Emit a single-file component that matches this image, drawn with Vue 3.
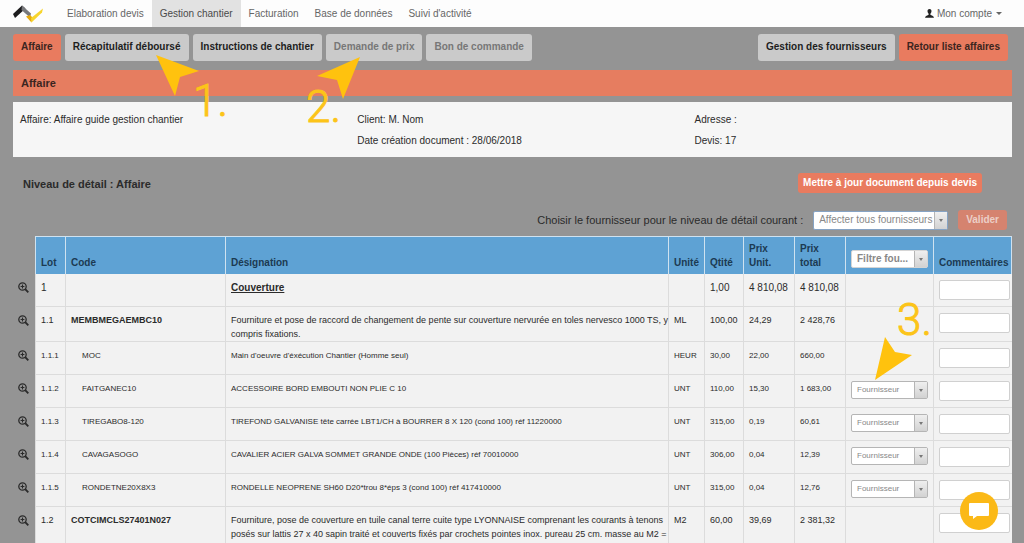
<script setup>
import { ref } from 'vue'

const navItems = ['Elaboration devis', 'Gestion chantier', 'Facturation', 'Base de données', "Suivi d'activité"]
const activeNav = ref('Gestion chantier')

const actions = [
  { label: 'Affaire', kind: 'primary' },
  { label: 'Récapitulatif déboursé', kind: 'plain' },
  { label: 'Instructions de chantier', kind: 'plain' },
  { label: 'Demande de prix', kind: 'muted' },
  { label: 'Bon de commande', kind: 'muted' },
]

const rows = [
  { lot: '1', code: '', text: 'Couverture', unit: '', qty: '1,00', price: '4 810,08', total: '4 810,08', level: 'lot' },
  { lot: '1.1', code: 'MEMBMEGAEMBC10', text: 'Fourniture et pose de raccord de changement de pente sur couverture nervurée en toles nervesco 1000 TS, y\ncompris fixations.', unit: 'ML', qty: '100,00', price: '24,29', total: '2 428,76', level: 'work' },
  { lot: '1.1.1', code: 'MOC', text: "Main d'oeuvre d'éxécution Chantier (Homme seul)", unit: 'HEUR', qty: '30,00', price: '22,00', total: '660,00', level: 'item' },
  { lot: '1.1.2', code: 'FAITGANEC10', text: 'ACCESSOIRE BORD EMBOUTI NON PLIE C 10', unit: 'UNT', qty: '110,00', price: '15,30', total: '1 683,00', level: 'item', supplier: true },
  { lot: '1.1.3', code: 'TIREGABO8-120', text: 'TIREFOND GALVANISE tête carrée LBT1/CH à BOURRER 8 X 120 (cond 100) réf 11220000', unit: 'UNT', qty: '315,00', price: '0,19', total: '60,61', level: 'item', supplier: true },
  { lot: '1.1.4', code: 'CAVAGASOGO', text: 'CAVALIER ACIER GALVA SOMMET GRANDE ONDE (100 Pièces) réf 70010000', unit: 'UNT', qty: '306,00', price: '0,04', total: '12,39', level: 'item', supplier: true },
  { lot: '1.1.5', code: 'RONDETNE20X8X3', text: 'RONDELLE NEOPRENE SH60 D20*trou 8*éps 3 (cond 100) réf 417410000', unit: 'UNT', qty: '315,00', price: '0,04', total: '12,76', level: 'item', supplier: true },
  { lot: '1.2', code: 'COTCIMCLS27401N027', text: 'Fourniture, pose de couverture en tuile canal terre cuite type LYONNAISE comprenant les courants à tenons\nposés sur lattis 27 x 40 sapin traité et couverts fixés par crochets pointes inox. pureau 25 cm. masse au M2 =', unit: 'M2', qty: '60,00', price: '39,69', total: '2 381,32', level: 'work' },
]
</script>

<template>
  <div class="page">
    <header class="navbar">
      <a class="logo" href="#" aria-label="Accueil">
        <svg width="32" height="20" viewBox="0 0 32 20">
          <path d="M0 10 9 1.500 12.500 4.500 2 14z" fill="#1c1c1e" />
          <path d="M9 1.500 18 9.500 17 13.500 8.500 6z" fill="#77787b" />
          <path d="M13 12.500 17 11 19.500 13.500 18.500 18.500z" fill="#e8a90c" />
          <path d="M18.500 18.500 18 14 30 4.500 29 8.500z" fill="#f7d52e" />
        </svg>
      </a>
      <nav class="nav">
        <a v-for="item in navItems" :key="item" href="#" :class="{ active: item === activeNav }" @click.prevent="activeNav = item">{{ item }}</a>
      </nav>
      <a class="account" href="#">
        <svg width="9" height="9" viewBox="0 0 10 10"><path d="M5 0C3.400 0 2.600 1.200 2.800 2.800 2.900 3.900 3.400 4.800 4 5.300V6.400C3 7 .3 7.500 0 9.700H10C9.700 7.500 7 7 6 6.400V5.300C6.600 4.800 7.100 3.900 7.200 2.800 7.400 1.200 6.600 0 5 0z" fill="#222" /></svg>
        <span>Mon compte</span>
        <span class="caret"></span>
      </a>
    </header>

    <main class="content">
      <div class="toolbar">
        <button v-for="a in actions" :key="a.label" type="button" class="btn" :class="a.kind">{{ a.label }}</button>
        <span class="spacer"></span>
        <button type="button" class="btn plain">Gestion des fournisseurs</button>
        <button type="button" class="btn primary">Retour liste affaires</button>
      </div>

      <h1 class="title">Affaire</h1>

      <section class="info">
        <div><p>Affaire: Affaire guide gestion chantier</p></div>
        <div><p>Client: M. Nom</p><p>Date création document : 28/06/2018</p></div>
        <div><p>Adresse :</p><p>Devis: 17</p></div>
      </section>

      <div class="level">
        <h2>Niveau de détail : Affaire</h2>
        <button type="button" class="small-btn">Mettre à jour document depuis devis</button>
      </div>

      <div class="assign">
        <label for="assign-all">Choisir le fournisseur pour le niveau de détail courant :</label>
        <span class="picker wide">
          <select id="assign-all"><option>Affecter tous fournisseurs</option></select>
          <span class="arrow"></span>
        </span>
        <button type="button" class="small-btn" disabled>Valider</button>
      </div>

      <table class="grid">
        <colgroup>
          <col class="c-zoom"><col class="c-lot"><col class="c-code"><col><col class="c-unit"><col class="c-qty"><col class="c-price"><col class="c-price"><col class="c-supplier"><col class="c-comment">
        </colgroup>
        <thead>
          <tr>
            <td class="zoom"></td>
            <th>Lot</th>
            <th>Code</th>
            <th>Désignation</th>
            <th>Unité</th>
            <th>Qtité</th>
            <th>Prix<br>Unit.</th>
            <th>Prix<br>total</th>
            <th>
              <span class="picker filter">
                <select aria-label="Filtre fournisseur"><option>Filtre fou...</option></select>
                <span class="arrow"></span>
              </span>
            </th>
            <th>Commentaires</th>
          </tr>
        </thead>
        <tbody>
          <tr v-for="r in rows" :key="r.lot" :class="r.level">
            <td class="zoom">
              <button type="button" :aria-label="'Détail ' + r.lot">
                <svg width="11" height="11" viewBox="0 0 11 11" fill="none" stroke="#2b2b2b">
                  <circle cx="4.500" cy="4.500" r="3.700" stroke-width="1.300" />
                  <path d="M7.200 7.200 10.300 10.300" stroke-width="1.900" />
                  <path d="M2.600 4.500h3.800M4.500 2.600v3.800" stroke-width="1.100" />
                </svg>
              </button>
            </td>
            <td>{{ r.lot }}</td>
            <td class="code">{{ r.code }}</td>
            <td class="text">{{ r.text }}</td>
            <td>{{ r.unit }}</td>
            <td class="num">{{ r.qty }}</td>
            <td class="num">{{ r.price }}</td>
            <td class="num">{{ r.total }}</td>
            <td class="field">
              <span v-if="r.supplier" class="picker">
                <select :aria-label="'Fournisseur ' + r.lot"><option>Fournisseur</option></select>
                <span class="arrow"></span>
              </span>
            </td>
            <td class="field"><input type="text" :aria-label="'Commentaires ' + r.lot"></td>
          </tr>
        </tbody>
      </table>
    </main>

    <div class="callout one">
      <svg width="43" height="41" viewBox="0 0 43 41"><path d="M0 0 43 16 24 22 19 41z" /></svg>
      <span>1.</span>
    </div>
    <div class="callout two">
      <svg width="43" height="42" viewBox="0 0 43 42"><path d="M43 0 0 19 20 23 26 42z" /></svg>
      <span>2.</span>
    </div>
    <div class="callout three">
      <span>3.</span>
      <svg width="37" height="43" viewBox="0 0 37 43"><path d="M0 43 10 0 20 15 37 18z" /></svg>
    </div>

    <button type="button" class="chat" aria-label="Discussion">
      <svg width="20" height="16" viewBox="0 0 20 16"><path d="M1 0H19Q20 0 20 1V12Q20 13 19 13H8L4 16V13H1Q0 13 0 12V1Q0 0 1 0z" fill="#fff" /></svg>
    </button>
  </div>
</template>

<style>
body {
  background: #949494;
}
</style>

<style scoped>
.page {
  position: relative;
  height: 100vh;
  overflow: hidden;
  background: #949494;
  color: #2b2b2b;
  font: 10px/14px "Liberation Sans", Arial, sans-serif;
}

button,
input,
select {
  margin: 0;
  font: inherit;
}

a {
  color: inherit;
  text-decoration: none;
}

.navbar {
  display: flex;
  align-items: center;
  height: 27px;
  padding: 0 22px 0 13px;
  background: #fdfdfd;
  color: #666;
}

.logo {
  display: flex;
  width: 46px;
}

.nav {
  display: flex;
  flex: 1;
}

.nav a {
  padding: 0 8px;
  line-height: 27px;
}

.nav .active {
  background: #e2e2e2;
  color: #4a4a4a;
}

.account {
  display: flex;
  align-items: center;
  gap: 3px;
  line-height: 26px;
}

.caret {
  margin-left: 1px;
  border: 3px solid transparent;
  border-top-color: #666;
  border-bottom-width: 0;
}

.content {
  padding: 7px 12px 0 13px;
}

.toolbar {
  display: flex;
  gap: 4px;
  padding-right: 4px;
}

.spacer {
  flex: 1;
}

.btn {
  height: 27px;
  padding: 0 8px 1px;
  border: 0;
  border-radius: 3px;
  font-weight: bold;
  white-space: nowrap;
}

.primary {
  background: #e97b5f;
  color: #3b2520;
}

.plain {
  background: #cacaca;
  color: #1e1e1e;
}

.muted {
  background: #cacaca;
  color: #777;
}

.title {
  margin: 9px 0 6px;
  padding: 0 8px;
  background: #e67d60;
  color: #3b2520;
  font-size: 11px;
  line-height: 26px;
}

.info {
  display: grid;
  grid-template-columns: 34% 34% 1fr;
  min-height: 55px;
  box-sizing: border-box;
  padding: 7px 0 6px 7px;
  background: #f6f6f6;
}

.info p {
  margin: 0;
  line-height: 21px;
}

.level {
  display: flex;
  justify-content: space-between;
  align-items: center;
  padding: 16px 30px 0 10px;
}

.level h2 {
  margin: 0;
  padding-top: 3px;
  font-size: 11px;
  line-height: 17px;
}

.small-btn {
  height: 20px;
  padding: 0 5px;
  border: 0;
  border-radius: 3px;
  background: #e97b5f;
  color: #fff;
  font-weight: bold;
}

.small-btn:disabled {
  padding: 0 8px;
  background: #d5836f;
  color: #eccfc7;
}

.assign {
  display: flex;
  justify-content: flex-end;
  align-items: center;
  gap: 10px;
  padding: 17px 5px 6px 0;
}

.assign label {
  font-size: 11px;
}

.picker {
  position: relative;
  display: flex;
  height: 18px;
  box-sizing: border-box;
  border: 1px solid #b5b5b5;
  border-radius: 2px;
  background: #fff;
}

.picker select {
  flex: 1;
  min-width: 0;
  padding: 0 12px 0 5px;
  border: 0;
  appearance: none;
  background: transparent;
  color: #888;
  text-overflow: clip;
}

.arrow {
  position: absolute;
  top: 0;
  right: 0;
  bottom: 0;
  display: flex;
  align-items: center;
  justify-content: center;
  width: 12px;
  border-left: 1px solid #b5b5b5;
  background: linear-gradient(#efefef, #d2d2d2);
  pointer-events: none;
}

.arrow::after {
  content: "";
  border: 2px solid transparent;
  border-top: 3px solid #777;
  border-bottom: 0;
}

.wide {
  width: 135px;
  height: 19px;
  border-color: #86a3c4;
}

.grid {
  width: 100%;
  table-layout: fixed;
  border-collapse: separate;
  border-spacing: 0;
}

.c-zoom {
  width: 22px;
}

.c-lot {
  width: 30px;
}

.c-code {
  width: 160px;
}

.c-unit {
  width: 36px;
}

.c-qty {
  width: 39px;
}

.c-price {
  width: 51px;
}

.c-supplier {
  width: 88px;
}

.c-comment {
  width: 79px;
}

.grid th {
  height: 38px;
  box-sizing: border-box;
  padding: 4px 0 4px 5px;
  border-top: 1px solid #cfe2f0;
  border-left: 1px solid #cfe2f0;
  background: #5ea2d4;
  color: #1c3a52;
  text-align: left;
  vertical-align: bottom;
}

.grid th:last-child {
  border-right: 1px solid #cfe2f0;
}

.filter {
  width: 77px;
  margin-bottom: 2px;
  border-color: #d5d5d5;
}

.grid td {
  height: 33px;
  box-sizing: border-box;
  padding: 7px 0 0 5px;
  border-bottom: 1px solid #dcdcdc;
  border-left: 1px solid #dcdcdc;
  background: #f2f2f2;
  vertical-align: top;
}

.num {
  white-space: nowrap;
}

.text {
  white-space: pre;
}

.lot .text {
  font-weight: bold;
  text-decoration: underline;
}

.grid .work td {
  height: 35px;
  padding-top: 6px;
  font-size: 9px;
}

.grid .work:last-child td {
  height: 50px;
}

.work .code {
  font-weight: bold;
}

.item td {
  font-size: 8px;
}

.grid .item .code {
  padding-left: 16px;
}

.grid tr td.zoom {
  padding: 8px 0 0 5px;
  border: 0;
  background: transparent;
}

.zoom button {
  display: flex;
  padding: 0;
  border: 0;
  background: none;
}

.grid .field {
  padding: 6px 2px 0 5px;
}

.field .picker {
  width: 77px;
}

.field input {
  display: block;
  width: 100%;
  height: 20px;
  box-sizing: border-box;
  border: 1px solid #d0d0d0;
  border-radius: 2px;
  background: #fff;
}

.callout {
  position: absolute;
  color: #fcc419;
  pointer-events: none;
}

.callout svg {
  display: block;
  fill: #ffc20e;
}

.callout span {
  position: absolute;
  font: 300 44px/44px Roboto, sans-serif;
  -webkit-text-stroke: 1px #fcc419;
}

.one {
  top: 55px;
  left: 156px;
}

.one span {
  top: 24px;
  left: 37px;
}

.two {
  top: 57px;
  left: 317px;
}

.two span {
  top: 28px;
  left: -11px;
}

.three {
  top: 337px;
  left: 875px;
}

.three span {
  top: -39px;
  left: 22px;
}

.chat {
  position: absolute;
  right: 26px;
  bottom: 13px;
  display: flex;
  align-items: center;
  justify-content: center;
  width: 38px;
  height: 38px;
  padding: 0;
  border: 0;
  border-radius: 50%;
  background: #fbb917;
}
</style>
